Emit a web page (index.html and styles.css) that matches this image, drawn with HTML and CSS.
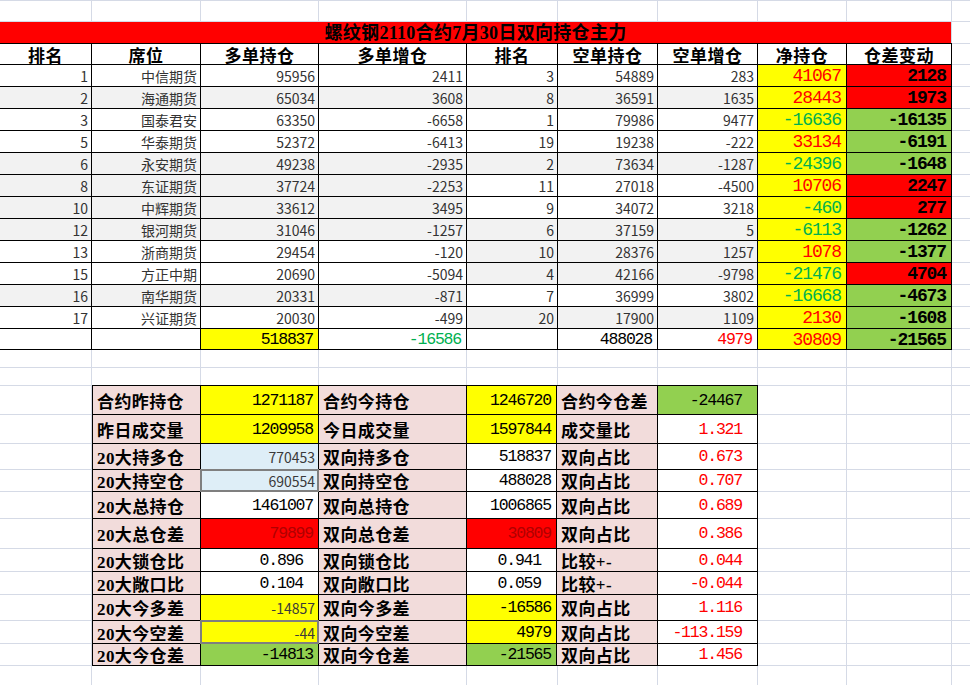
FILE: index.html
```html
<!DOCTYPE html>
<html lang="zh-CN">
<head>
<meta charset="utf-8">
<title>螺纹钢2110合约7月30日双向持仓主力</title>
<link rel="stylesheet" href="styles.css">
</head>
<body>
<div class="sheet">
  <div class="title">螺纹钢2110合约7月30日双向持仓主力</div>
  <div class="main">
    <div class="c h">排名</div><div class="c h">席位</div><div class="c h">多单持仓</div><div class="c h">多单增仓</div><div class="c h">排名</div><div class="c h">空单持仓</div><div class="c h">空单增仓</div><div class="c h">净持仓</div><div class="c h">仓差变动</div>

    <div class="c">1</div><div class="c">中信期货</div><div class="c">95956</div><div class="c">2411</div><div class="c">3</div><div class="c">54889</div><div class="c">283</div><div class="c net red">41067</div><div class="c chg up">2128</div>
    <div class="c alt">2</div><div class="c alt">海通期货</div><div class="c alt">65034</div><div class="c alt">3608</div><div class="c alt">8</div><div class="c alt">36591</div><div class="c alt">1635</div><div class="c net red">28443</div><div class="c chg up">1973</div>
    <div class="c">3</div><div class="c">国泰君安</div><div class="c">63350</div><div class="c">-6658</div><div class="c">1</div><div class="c">79986</div><div class="c">9477</div><div class="c net grn">-16636</div><div class="c chg dn">-16135</div>
    <div class="c">5</div><div class="c">华泰期货</div><div class="c">52372</div><div class="c">-6413</div><div class="c">19</div><div class="c">19238</div><div class="c">-222</div><div class="c net red">33134</div><div class="c chg dn">-6191</div>
    <div class="c alt">6</div><div class="c alt">永安期货</div><div class="c alt">49238</div><div class="c alt">-2935</div><div class="c alt">2</div><div class="c alt">73634</div><div class="c alt">-1287</div><div class="c net grn">-24396</div><div class="c chg dn">-1648</div>
    <div class="c alt">8</div><div class="c alt">东证期货</div><div class="c alt">37724</div><div class="c alt">-2253</div><div class="c">11</div><div class="c">27018</div><div class="c">-4500</div><div class="c net red">10706</div><div class="c chg up">2247</div>
    <div class="c alt">10</div><div class="c alt">中辉期货</div><div class="c alt">33612</div><div class="c alt">3495</div><div class="c">9</div><div class="c">34072</div><div class="c">3218</div><div class="c net grn">-460</div><div class="c chg up">277</div>
    <div class="c alt">12</div><div class="c alt">银河期货</div><div class="c alt">31046</div><div class="c alt">-1257</div><div class="c alt">6</div><div class="c alt">37159</div><div class="c alt">5</div><div class="c net grn">-6113</div><div class="c chg dn">-1262</div>
    <div class="c">13</div><div class="c">浙商期货</div><div class="c">29454</div><div class="c">-120</div><div class="c alt">10</div><div class="c alt">28376</div><div class="c alt">1257</div><div class="c net red">1078</div><div class="c chg dn">-1377</div>
    <div class="c">15</div><div class="c">方正中期</div><div class="c">20690</div><div class="c">-5094</div><div class="c alt">4</div><div class="c alt">42166</div><div class="c alt">-9798</div><div class="c net grn">-21476</div><div class="c chg up">4704</div>
    <div class="c alt">16</div><div class="c alt">南华期货</div><div class="c alt">20331</div><div class="c alt">-871</div><div class="c">7</div><div class="c">36999</div><div class="c">3802</div><div class="c net grn">-16668</div><div class="c chg dn">-4673</div>
    <div class="c">17</div><div class="c">兴证期货</div><div class="c">20030</div><div class="c">-499</div><div class="c alt">20</div><div class="c alt">17900</div><div class="c alt">1109</div><div class="c net red">2130</div><div class="c chg dn">-1608</div>

    <div class="c"></div><div class="c"></div><div class="c mono yel">518837</div><div class="c mono gtx">-16586</div><div class="c"></div><div class="c mono">488028</div><div class="c mono rtx">4979</div><div class="c net red">30809</div><div class="c chg dn">-21565</div>
  </div>

  <div class="summary">
    <div class="s lb">合约昨持仓</div><div class="s v yel">1271187</div><div class="s lb">合约今持仓</div><div class="s v yel">1246720</div><div class="s lb">合约今仓差</div><div class="s v grnbg wide">-24467</div>
    <div class="s lb">昨日成交量</div><div class="s v yel">1209958</div><div class="s lb">今日成交量</div><div class="s v yel">1597844</div><div class="s lb">成交量比</div><div class="s v rtx wide">1.321</div>
    <div class="s lb">20大持多仓</div><div class="s vs blu">770453</div><div class="s lb">双向持多仓</div><div class="s v">518837</div><div class="s lb">双向占比</div><div class="s v rtx wide">0.673</div>
    <div class="s lb">20大持空仓</div><div class="s vs blu sel">690554</div><div class="s lb">双向持空仓</div><div class="s v">488028</div><div class="s lb">双向占比</div><div class="s v rtx wide">0.707</div>
    <div class="s lb">20大总持仓</div><div class="s v">1461007</div><div class="s lb">双向总持仓</div><div class="s v">1006865</div><div class="s lb">双向占比</div><div class="s v rtx wide">0.689</div>
    <div class="s lb">20大总仓差</div><div class="s v redbg">79899</div><div class="s lb">双向总仓差</div><div class="s v redbg">30809</div><div class="s lb">双向占比</div><div class="s v rtx wide">0.386</div>
    <div class="s lb">20大锁仓比</div><div class="s v wide">0.896</div><div class="s lb">双向锁仓比</div><div class="s v wide">0.941</div><div class="s lb">比较+-</div><div class="s v rtx wide">0.044</div>
    <div class="s lb">20大敞口比</div><div class="s v wide">0.104</div><div class="s lb">双向敞口比</div><div class="s v wide">0.059</div><div class="s lb">比较+-</div><div class="s v rtx wide">-0.044</div>
    <div class="s lb">20大今多差</div><div class="s vs yel">-14857</div><div class="s lb">双向今多差</div><div class="s v yel">-16586</div><div class="s lb">双向占比</div><div class="s v rtx wide">1.116</div>
    <div class="s lb">20大今空差</div><div class="s vs yel sel">-44</div><div class="s lb">双向今空差</div><div class="s v yel">4979</div><div class="s lb">双向占比</div><div class="s v rtx wide">-113.159</div>
    <div class="s lb">20大今仓差</div><div class="s v grnbg">-14813</div><div class="s lb">双向今仓差</div><div class="s v grnbg">-21565</div><div class="s lb">双向占比</div><div class="s v rtx wide">1.456</div>
  </div>
</div>
</body>
</html>
```

FILE: styles.css
```css
:root {
  --gl: linear-gradient(#d5dae6, #d5dae6);
}

html, body {
  margin: 0;
  padding: 0;
}

body {
  width: 970px;
  height: 685px;
  overflow: hidden;
  background:
    var(--gl) 91px 0 / 1px 100% no-repeat,
    var(--gl) 200px 0 / 1px 100% no-repeat,
    var(--gl) 318px 0 / 1px 100% no-repeat,
    var(--gl) 466px 0 / 1px 100% no-repeat,
    var(--gl) 557px 0 / 1px 100% no-repeat,
    var(--gl) 657px 0 / 1px 100% no-repeat,
    var(--gl) 757px 0 / 1px 100% no-repeat,
    var(--gl) 846px 0 / 1px 100% no-repeat,
    var(--gl) 951px 0 / 1px 100% no-repeat,
    var(--gl) 0 0 / 100% 1px no-repeat,
    var(--gl) 0 21px / 100% 1px no-repeat,
    var(--gl) 0 43px / 100% 1px no-repeat,
    var(--gl) 0 64px / 100% 1px no-repeat,
    var(--gl) 0 86px / 100% 1px no-repeat,
    var(--gl) 0 108px / 100% 1px no-repeat,
    var(--gl) 0 130px / 100% 1px no-repeat,
    var(--gl) 0 152px / 100% 1px no-repeat,
    var(--gl) 0 174px / 100% 1px no-repeat,
    var(--gl) 0 196px / 100% 1px no-repeat,
    var(--gl) 0 218px / 100% 1px no-repeat,
    var(--gl) 0 240px / 100% 1px no-repeat,
    var(--gl) 0 262px / 100% 1px no-repeat,
    var(--gl) 0 284px / 100% 1px no-repeat,
    var(--gl) 0 306px / 100% 1px no-repeat,
    var(--gl) 0 328px / 100% 1px no-repeat,
    var(--gl) 0 349px / 100% 1px no-repeat,
    var(--gl) 0 367px / 100% 1px no-repeat,
    var(--gl) 0 385px / 100% 1px no-repeat,
    var(--gl) 0 414px / 100% 1px no-repeat,
    var(--gl) 0 443px / 100% 1px no-repeat,
    var(--gl) 0 469px / 100% 1px no-repeat,
    var(--gl) 0 491px / 100% 1px no-repeat,
    var(--gl) 0 518px / 100% 1px no-repeat,
    var(--gl) 0 548px / 100% 1px no-repeat,
    var(--gl) 0 571px / 100% 1px no-repeat,
    var(--gl) 0 594px / 100% 1px no-repeat,
    var(--gl) 0 620px / 100% 1px no-repeat,
    var(--gl) 0 643px / 100% 1px no-repeat,
    var(--gl) 0 665px / 100% 1px no-repeat,
    #ffffff;
}

.sheet {
  padding-top: 22px;
  width: 970px;
}

.title {
  width: 951px;
  height: 21px;
  background: #ff0000;
  display: flex;
  align-items: center;
  justify-content: center;
  font: bold 18px "Liberation Serif", "Noto Sans CJK SC", serif;
  letter-spacing: 0.3px;
  color: #000;
  line-height: 1;
}

.main {
  display: grid;
  grid-template-columns: 91px 108px 117px 147px 90px 99px 99px 88px 104px;
  grid-template-rows: 20px repeat(12, 21px) 20px;
  gap: 1px;
  background: #000;
  border-top: 1px solid #000;
  border-right: 1px solid #000;
  border-bottom: 1px solid #000;
  width: max-content;
}

.c {
  display: flex;
  align-items: center;
  justify-content: flex-end;
  padding: 1px 3px 0 0;
  background: #fff;
  font: 14px "Noto Sans CJK SC", sans-serif;
  color: #333;
  line-height: 1;
  white-space: nowrap;
  overflow: hidden;
}

.c.h {
  justify-content: center;
  padding: 0;
  font: bold 17px "Liberation Serif", "Noto Sans CJK SC", serif;
  letter-spacing: 0.5px;
  color: #000;
}

.c.alt { background: #f2f2f2; }

.c.mono {
  font: 16.5px "Liberation Mono", monospace;
  letter-spacing: -1.2px;
  color: #000;
  padding-right: 5px;
}

.yel { background: #ffff00 !important; }
.gtx { color: #00b050 !important; }
.rtx { color: #ff0000 !important; }

.c.net {
  background: #ffff00;
  font: 18px "Liberation Mono", monospace;
  letter-spacing: -1.1px;
  padding-right: 5px;
}
.c.net.red { color: #ff0000; }
.c.net.grn { color: #00b050; }

.c.chg {
  font: bold 18px "Liberation Mono", monospace;
  letter-spacing: -1.1px;
  color: #000;
  padding-right: 5px;
}
.c.chg.up { background: #ff0000; }
.c.chg.dn { background: #92d050; }

.summary {
  margin: 35px 0 0 92px;
  display: grid;
  grid-template-columns: 107px 117px 147px 89px 100px 99px;
  grid-template-rows: 28px 28px 25px 21px 26px 29px 22px 22px 25px 22px 21px;
  gap: 1px;
  background: #000;
  border: 1px solid #000;
  width: max-content;
}

.s {
  display: flex;
  align-items: center;
  background: #fff;
  line-height: 1;
  white-space: nowrap;
  overflow: hidden;
}

.s.lb {
  background: #f2dcdb;
  justify-content: flex-start;
  padding-left: 4px;
  font: bold 17px "Liberation Serif", "Noto Sans CJK SC", serif;
  letter-spacing: 0.4px;
  color: #000;
}

.s.v {
  justify-content: flex-end;
  padding-right: 5px;
  font: 16.5px "Liberation Mono", monospace;
  letter-spacing: -1.2px;
  color: #000;
}

.s.vs {
  justify-content: flex-end;
  padding: 1px 3px 0 0;
  font: 14px "Noto Sans CJK SC", sans-serif;
  color: #3a3a3a;
}

.s.wide { padding-right: 15px; }

.blu { background: #deeef7; }
.grnbg { background: #92d050; }
.redbg { background: #ff0000; color: #b00000 !important; }

.sel {
  box-shadow: 0 0 0 1px #7f7f7f, inset 0 0 0 1px #7f7f7f;
}
```
